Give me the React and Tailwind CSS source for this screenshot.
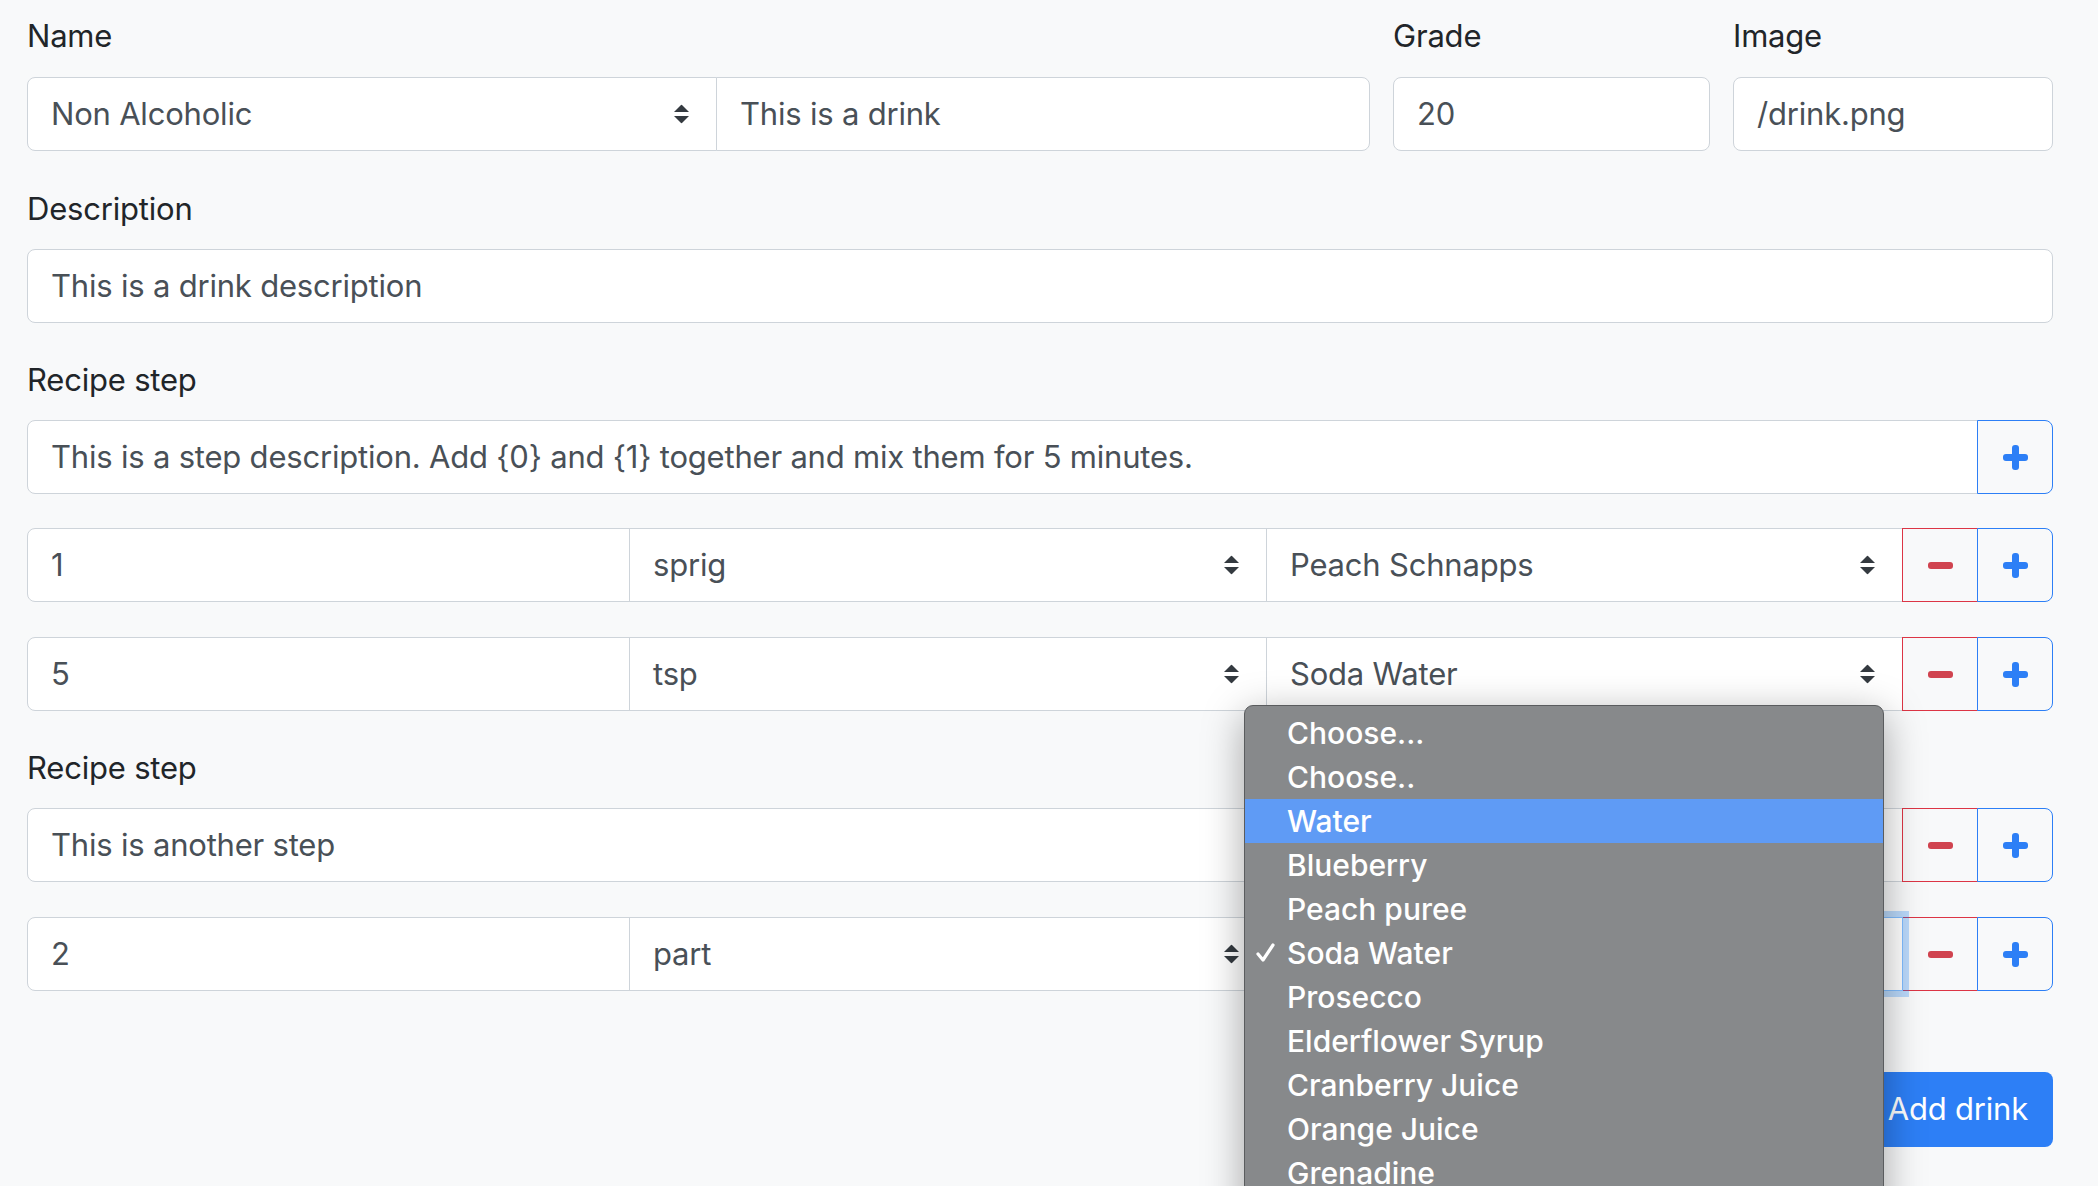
import React from "react";

const font = { fontFamily: "Inter, 'Liberation Sans', sans-serif" };

// up/down arrows of a custom select
function SelectArrows() {
  return (
    <svg width="15" height="19" viewBox="0 0 15 19" className="absolute right-[27px] top-1/2 -translate-y-1/2">
      <polygon points="7.5,0 15,7.5 0,7.5" fill="#343a40" />
      <polygon points="0,11.5 15,11.5 7.5,19" fill="#343a40" />
    </svg>
  );
}

function Select({ value, className = "", focused = false }) {
  return (
    <div
      className={
        "relative h-[74px] flex items-center pl-[23px] bg-white text-[31px] tracking-[-0.2px] text-[#495057] border " +
        (focused
          ? "z-10 border-[#80bdff] shadow-[0_0_0_6px_rgba(0,123,255,0.25)] "
          : "border-[#ced4da] ") +
        className
      }
    >
      <span>{value}</span>
      <SelectArrows />
    </div>
  );
}

function Input({ value, className = "" }) {
  return (
    <div
      className={
        "h-[74px] flex items-center pl-[23px] bg-white text-[31px] tracking-[-0.2px] text-[#495057] border border-[#ced4da] " +
        className
      }
    >
      {value}
    </div>
  );
}

function MinusButton() {
  return (
    <button className="relative -ml-px w-[76px] h-[74px] flex items-center justify-center border border-[#dc3545] bg-[#f8f9fa]">
      <svg width="25" height="7" viewBox="0 0 25 7">
        <rect x="0" y="0" width="25" height="7" rx="3" fill="#d0434f" />
      </svg>
    </button>
  );
}

function PlusButton() {
  return (
    <button className="relative -ml-px w-[76px] h-[74px] flex items-center justify-center border border-[#2d7ff6] bg-[#f8f9fa] rounded-r-[8px]">
      <svg width="25" height="25" viewBox="0 0 25 25">
        <rect x="0" y="9" width="25" height="7" rx="3" fill="#2d7ff6" />
        <rect x="9" y="0" width="7" height="25" rx="3" fill="#2d7ff6" />
      </svg>
    </button>
  );
}

function Label({ children }) {
  return <div className="text-[31px] leading-[46px] tracking-[-0.2px] text-[#212529] mb-[17px]">{children}</div>;
}

function IngredientRow({ qty, unit, ingredient, focused, className = "" }) {
  return (
    <div className={"flex " + className}>
      <Input value={qty} className="w-[603px] rounded-l-[8px]" />
      <Select value={unit} className="-ml-px w-[638px]" />
      <Select value={ingredient} className="-ml-px w-[637px]" focused={focused} />
      <MinusButton />
      <PlusButton />
    </div>
  );
}

const options = [
  "Choose...",
  "Choose..",
  "Water",
  "Blueberry",
  "Peach puree",
  "Soda Water",
  "Prosecco",
  "Elderflower Syrup",
  "Cranberry Juice",
  "Orange Juice",
  "Grenadine",
];

export default function App() {
  return (
    <div className="relative w-[2098px] h-[1186px] overflow-hidden bg-[#f8f9fa]" style={font}>
      <div className="w-[2026px] ml-[27px] pt-[13px]">
        {/* Name / Grade / Image */}
        <div className="flex gap-[23px] mb-[35px]">
          <div className="w-[1343px]">
            <div className="text-[31px] leading-[46px] tracking-[-0.2px] text-[#212529] mb-[18px]">Name</div>
            <div className="flex">
              <Select value="Non Alcoholic" className="w-[690px] rounded-l-[8px]" />
              <Input value="This is a drink" className="-ml-px flex-1 rounded-r-[8px]" />
            </div>
          </div>
          <div className="w-[317px]">
            <div className="text-[31px] leading-[46px] tracking-[-0.2px] text-[#212529] mb-[18px]">Grade</div>
            <Input value="20" className="rounded-[8px]" />
          </div>
          <div className="w-[320px]">
            <div className="text-[31px] leading-[46px] tracking-[-0.2px] text-[#212529] mb-[18px]">Image</div>
            <Input value="/drink.png" className="rounded-[8px]" />
          </div>
        </div>

        {/* Description */}
        <div className="mb-[34px]">
          <Label>Description</Label>
          <Input value="This is a drink description" className="rounded-[8px]" />
        </div>

        {/* Step 1 */}
        <div className="mb-[34px]">
          <Label>Recipe step</Label>
          <div className="flex">
            <Input
              value="This is a step description. Add {0} and {1} together and mix them for 5 minutes."
              className="flex-1 rounded-l-[8px]"
            />
            <PlusButton />
          </div>
        </div>
        <IngredientRow qty="1" unit="sprig" ingredient="Peach Schnapps" className="mb-[35px]" />
        <IngredientRow qty="5" unit="tsp" ingredient="Soda Water" className="mb-[34px]" />

        {/* Step 2 */}
        <div className="mb-[35px]">
          <Label>Recipe step</Label>
          <div className="flex">
            <Input value="This is another step" className="flex-1 rounded-l-[8px]" />
            <MinusButton />
            <PlusButton />
          </div>
        </div>
        <IngredientRow qty="2" unit="part" ingredient="Soda Water" focused />

        <div className="flex justify-end mt-[81px]">
          <button className="h-[75px] px-[25px] rounded-[8px] bg-[#2d7ff6] text-white text-[31px] tracking-[-0.2px]">
            Add drink
          </button>
        </div>
      </div>

      {/* open native select popup */}
      <div className="absolute z-20 left-[1244px] top-[705px] w-[640px] h-[520px] pt-[5px] rounded-t-[9px] border border-[#5a5c5e] bg-[#87898b] shadow-[0_10px_40px_rgba(0,0,0,0.35)]">
        {options.map((o) => (
          <div
            key={o}
            className={
              "relative h-[44px] flex items-center pl-[42px] text-[30px] font-medium text-white " +
              (o === "Water" ? "bg-[#5f9bf5]" : "")
            }
          >
            {o === "Soda Water" && (
              <svg width="19" height="20" viewBox="0 0 19 20" className="absolute left-[11px] top-1/2 -translate-y-1/2">
                <path d="M2 11 L7 17 L17 2" fill="none" stroke="white" strokeWidth="3.2" strokeLinecap="round" strokeLinejoin="round" />
              </svg>
            )}
            {o}
          </div>
        ))}
      </div>
    </div>
  );
}
